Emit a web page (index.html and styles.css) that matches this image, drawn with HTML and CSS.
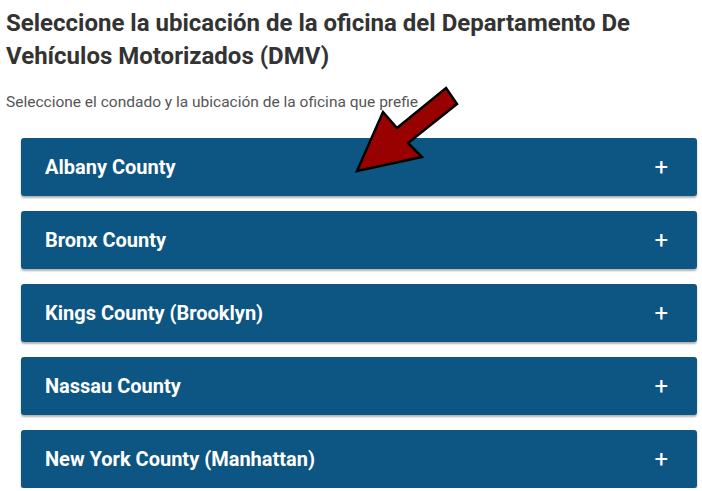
FILE: index.html
```html
<!DOCTYPE html>
<html lang="es">
<head>
  <meta charset="UTF-8">
  <title>Ubicación de la oficina DMV</title>
  <link rel="stylesheet" href="styles.css">
</head>
<body>
  <div class="page">
    <h1>Seleccione la ubicación de la oficina del Departamento De Vehículos Motorizados (DMV)</h1>
    <p class="intro">Seleccione el condado y la ubicación de la oficina que prefie</p>

    <div class="counties">
      <div class="county"><span>Albany County</span><span class="plus">+</span></div>
      <div class="county"><span>Bronx County</span><span class="plus">+</span></div>
      <div class="county"><span>Kings County (Brooklyn)</span><span class="plus">+</span></div>
      <div class="county"><span>Nassau County</span><span class="plus">+</span></div>
      <div class="county"><span>New York County (Manhattan)</span><span class="plus">+</span></div>
    </div>

    <svg class="arrow" width="702" height="200" viewBox="0 0 702 200">
      <polygon points="446,88 457,104 408,143 422,157 357,171 383,112 397,128" fill="#990000" stroke="#000" stroke-width="2.5" stroke-linejoin="miter"/>
    </svg>
  </div>
</body>
</html>
```

FILE: styles.css
```css
body {
  margin: 0;
  font-family: Roboto, "Liberation Sans", sans-serif;
  background: white;
}
.page {
  position: relative;
  padding: 7px 5px 0 6px;
}
h1 {
  font-size: 24px;
  font-weight: 700;
  line-height: 33px;
  color: #333;
  margin: 0;
  padding-right: 40px;
}
.intro {
  font-size: 15.5px;
  color: #555;
  margin: 19px 0 0 0;
  line-height: 20px;
}
.counties {
  margin: 26px 0 0 15px;
  display: flex;
  flex-direction: column;
  gap: 15px;
}
.county {
  height: 58px;
  background: #0d5582;
  border-radius: 3px;
  box-shadow: 0 2px 2px rgba(0,0,0,0.3);
  color: white;
  font-size: 20px;
  font-weight: 700;
  display: flex;
  align-items: center;
  justify-content: space-between;
  padding: 0 29px 0 24px;
}
.plus {
  font-size: 24px;
  font-weight: 400;
}
.arrow {
  position: absolute;
  left: 0;
  top: 0;
}
```
